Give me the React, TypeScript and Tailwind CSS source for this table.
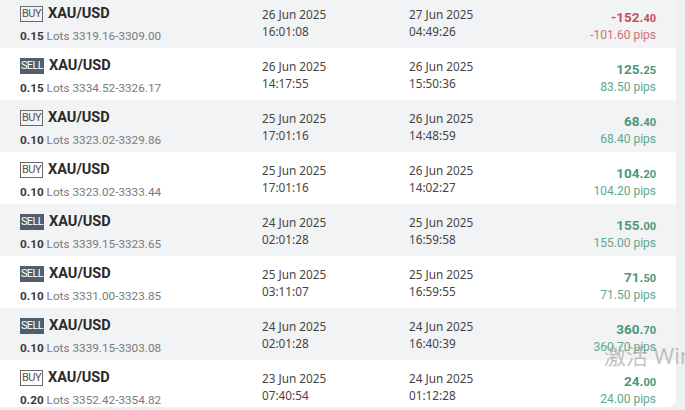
import React from "react";

type Trade = {
  side: "BUY" | "SELL";
  lots: string;
  range: string;
  openDate: string;
  openTime: string;
  closeDate: string;
  closeTime: string;
  amount: string;
  cents: string;
  pips: string;
};

const trades: Trade[] = [
  { side: "BUY", lots: "0.15", range: "3319.16-3309.00", openDate: "26 Jun 2025", openTime: "16:01:08", closeDate: "27 Jun 2025", closeTime: "04:49:26", amount: "-152.", cents: "40", pips: "-101.60 pips" },
  { side: "SELL", lots: "0.15", range: "3334.52-3326.17", openDate: "26 Jun 2025", openTime: "14:17:55", closeDate: "26 Jun 2025", closeTime: "15:50:36", amount: "125.", cents: "25", pips: "83.50 pips" },
  { side: "BUY", lots: "0.10", range: "3323.02-3329.86", openDate: "25 Jun 2025", openTime: "17:01:16", closeDate: "26 Jun 2025", closeTime: "14:48:59", amount: "68.", cents: "40", pips: "68.40 pips" },
  { side: "BUY", lots: "0.10", range: "3323.02-3333.44", openDate: "25 Jun 2025", openTime: "17:01:16", closeDate: "26 Jun 2025", closeTime: "14:02:27", amount: "104.", cents: "20", pips: "104.20 pips" },
  { side: "SELL", lots: "0.10", range: "3339.15-3323.65", openDate: "24 Jun 2025", openTime: "02:01:28", closeDate: "25 Jun 2025", closeTime: "16:59:58", amount: "155.", cents: "00", pips: "155.00 pips" },
  { side: "SELL", lots: "0.10", range: "3331.00-3323.85", openDate: "25 Jun 2025", openTime: "03:11:07", closeDate: "25 Jun 2025", closeTime: "16:59:55", amount: "71.", cents: "50", pips: "71.50 pips" },
  { side: "SELL", lots: "0.10", range: "3339.15-3303.08", openDate: "24 Jun 2025", openTime: "02:01:28", closeDate: "24 Jun 2025", closeTime: "16:40:39", amount: "360.", cents: "70", pips: "360.70 pips" },
  { side: "BUY", lots: "0.20", range: "3352.42-3354.82", openDate: "23 Jun 2025", openTime: "07:40:54", closeDate: "24 Jun 2025", closeTime: "01:12:28", amount: "24.", cents: "00", pips: "24.00 pips" },
];

const din = { fontFamily: "Roboto, 'Liberation Sans', sans-serif" };
const ui = { fontFamily: "'Noto Sans', 'Open Sans', sans-serif" };

function SideBadge({ side }: { side: Trade["side"] }) {
  if (side === "SELL") {
    return (
      <span className="flex h-[16px] w-[24px] items-center justify-center bg-[#4f5f70] text-[11px] tracking-[-0.6px] text-white">
        SELL
      </span>
    );
  }
  return (
    <span className="flex h-[16px] w-[23px] items-center justify-center border border-[#6b6b6b] text-[11px] tracking-[-0.5px] text-[#555]">
      BUY
    </span>
  );
}

function TradeRow({ t, index }: { t: Trade; index: number }) {
  const loss = t.amount.startsWith("-");
  return (
    <div className={`flex h-[52px] shrink-0 px-5 ${index % 2 === 0 ? "bg-[#f2f3f5]" : "bg-white"}`}>
      <div className="w-[242px] pt-[8px]" style={din}>
        <div className="flex h-[20px] items-center gap-[5px]">
          <SideBadge side={t.side} />
          <span className="text-[14.5px] font-bold text-[#2a2a2a]">XAU/USD</span>
        </div>
        <div className="mt-[2px] text-[11.75px] leading-[20px] text-[#7a7a7a]">
          <span className="font-bold text-[#3a3a3a]">{t.lots}</span> Lots {t.range}
        </div>
      </div>
      <div className="w-[147px] pt-[10px] text-[11.75px] leading-[17px] text-[#454545]" style={ui}>
        <div>{t.openDate}</div>
        <div>{t.openTime}</div>
      </div>
      <div className="flex-1 pt-[10px] text-[11.75px] leading-[17px] text-[#454545]" style={ui}>
        <div>{t.closeDate}</div>
        <div>{t.closeTime}</div>
      </div>
      <div className="pt-[13px] text-right leading-[16px]" style={din}>
        <div className={`font-bold ${loss ? "text-[#c4505c]" : "text-[#4b977b]"}`}>
          <span className="text-[13.5px]">{t.amount}</span>
          <span className="text-[11px]">{t.cents}</span>
        </div>
        <div className={`text-[12px] ${loss ? "text-[#cf6f78]" : "text-[#62a68d]"}`}>{t.pips}</div>
      </div>
    </div>
  );
}

export default function App() {
  return (
    <div className="relative h-[410px] w-[685px] overflow-hidden bg-[#eef0f2]">
      <div className="-mt-1 mr-[9px] flex h-[411px] flex-col overflow-hidden rounded-br-lg">
        {trades.map((t, i) => (
          <TradeRow key={i} t={t} index={i} />
        ))}
      </div>
      <div
        className="pointer-events-none absolute left-[604px] top-[339px] whitespace-nowrap text-[22px] text-[#9a9a9a]/60"
        style={{ fontFamily: "'Noto Sans', 'Noto Sans CJK SC', sans-serif" }}
      >
        激活 Windows
      </div>
    </div>
  );
}
